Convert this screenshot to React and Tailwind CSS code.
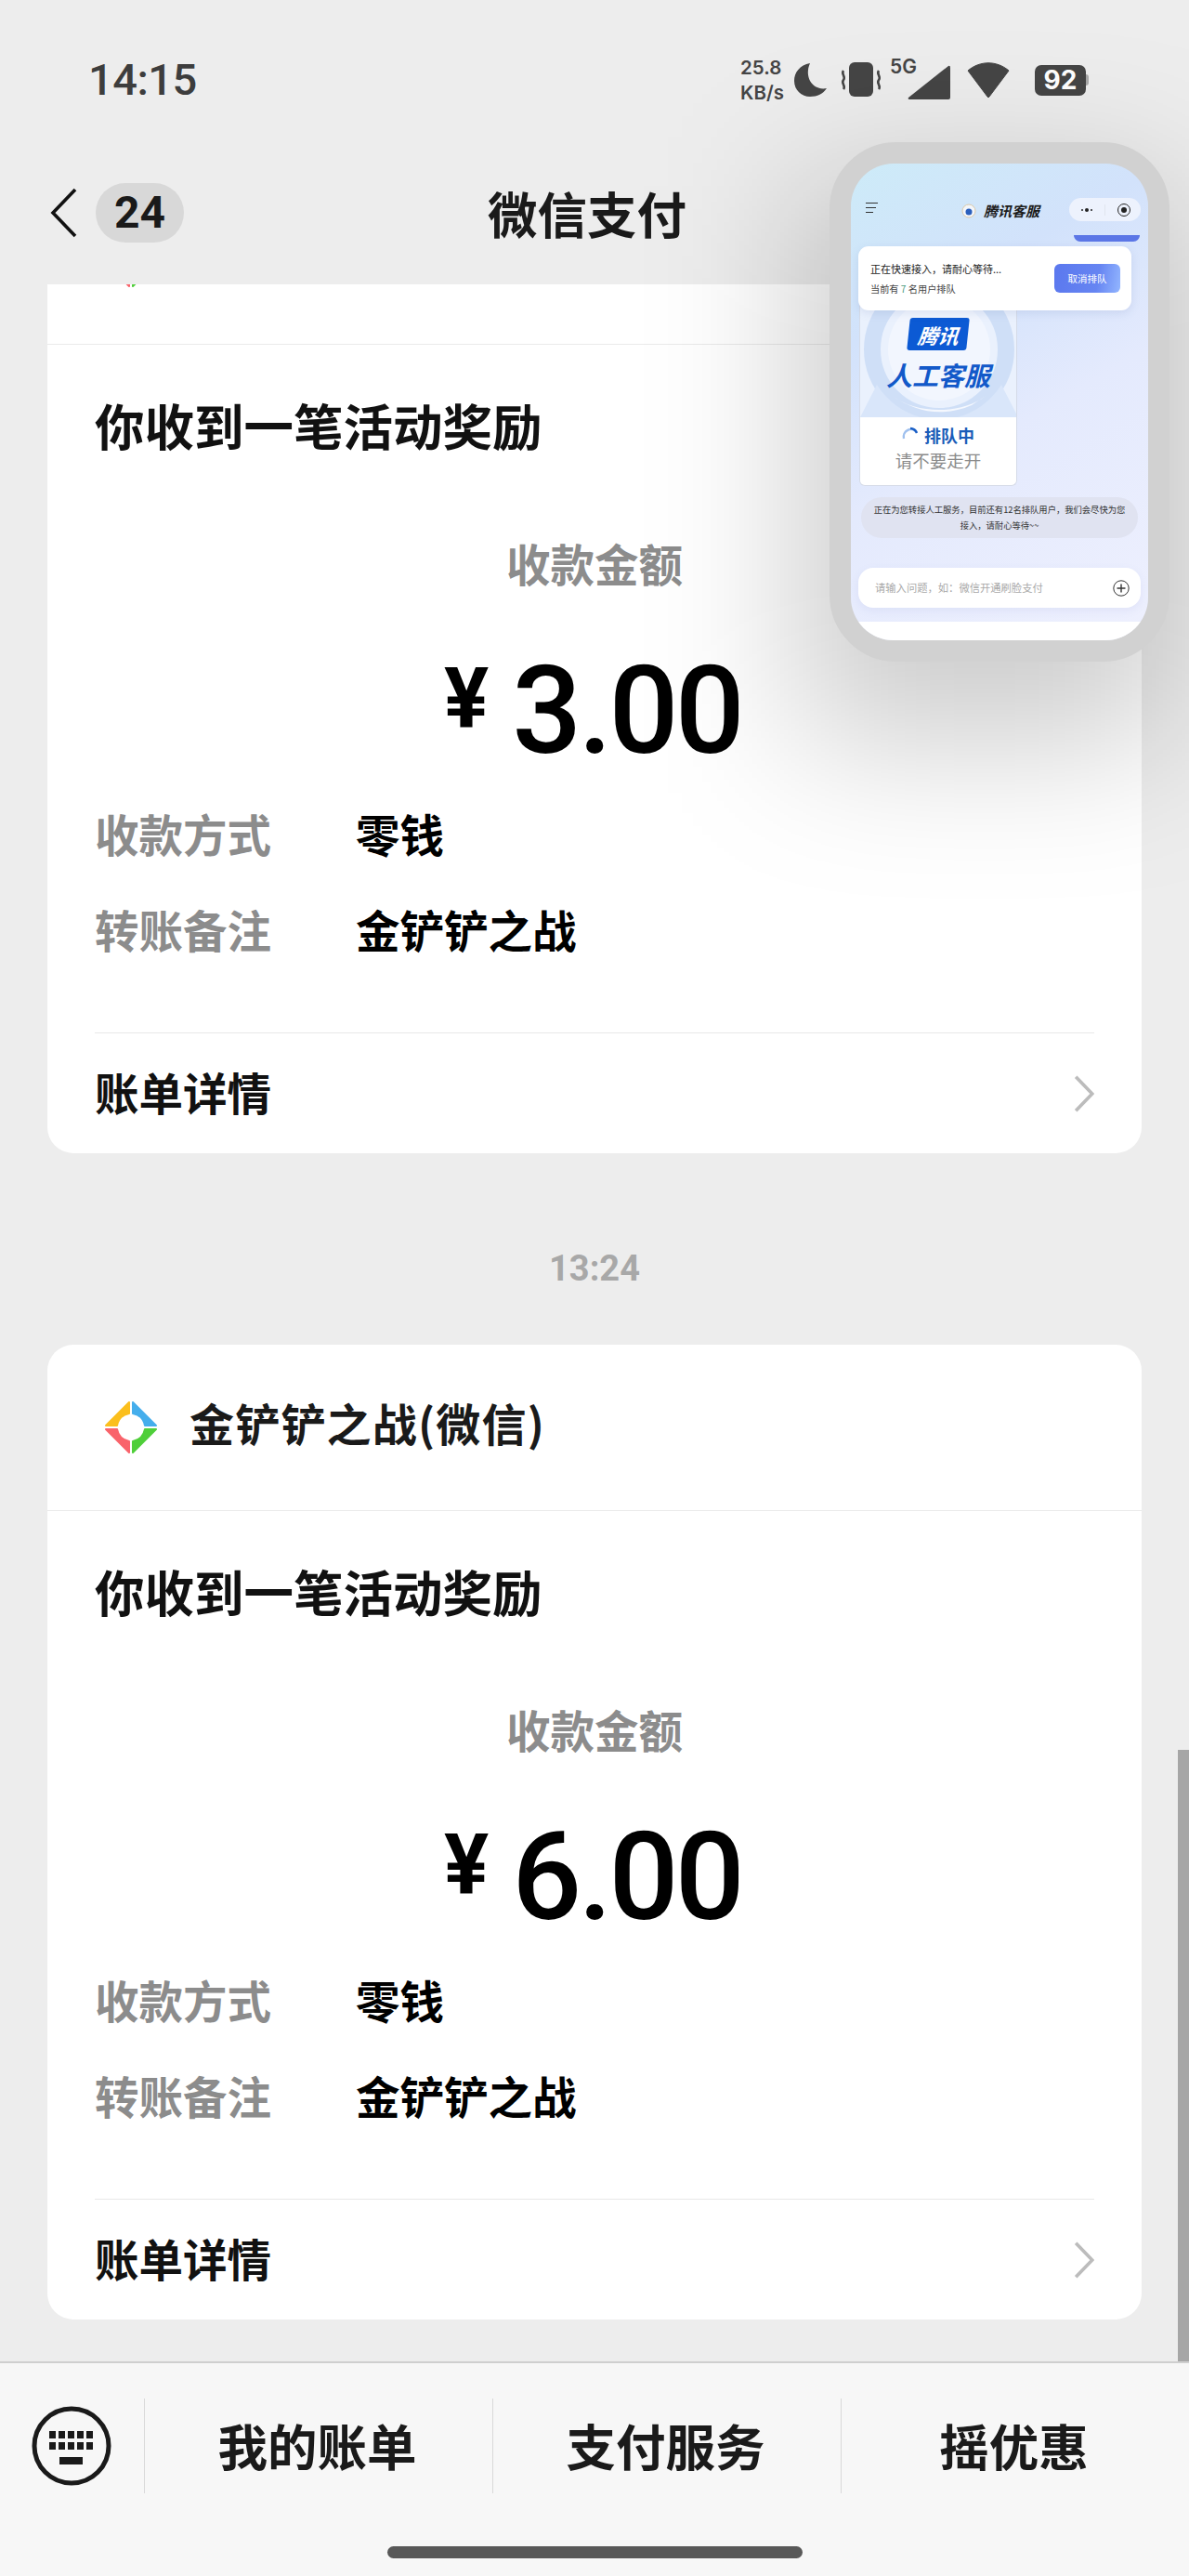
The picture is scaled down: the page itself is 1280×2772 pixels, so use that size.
const cjk = "font-['Noto_Sans_CJK_SC',sans-serif]";

const GameLogo = () => (
  <svg width="58" height="58" viewBox="0 0 58 58">
    <path d="M27 2 L27 14 Q16 16 14 27 L2 27 Z" fill="#fbbf1d" stroke="#fbbf1d" strokeWidth="2" strokeLinejoin="round" />
    <path d="M31 2 L31 14 Q42 16 44 27 L56 27 Z" fill="#45aeec" stroke="#45aeec" strokeWidth="2" strokeLinejoin="round" />
    <path d="M27 56 L27 44 Q16 42 14 31 L2 31 Z" fill="#f9636b" stroke="#f9636b" strokeWidth="2" strokeLinejoin="round" />
    <path d="M31 56 L31 44 Q42 42 44 31 L56 31 Z" fill="#4fcf3a" stroke="#4fcf3a" strokeWidth="2" strokeLinejoin="round" />
  </svg>
);

const Chevron = ({ className, color = '#111', width = 3 }) => (
  <svg className={className} viewBox="0 0 30 54" fill="none">
    <path d="M27 2 L3 27 L27 52" stroke={color} strokeWidth={width} />
  </svg>
);

const PayCard = ({ amount, className = '' }) => (
  <div className={`mx-[51px] rounded-[28px] bg-white ${className}`}>
    <div className="flex h-[179px] items-center border-b border-[#ebebeb] pl-[61px]">
      <GameLogo />
      <span className="mb-[12px] ml-[34px] text-[48px] font-bold leading-[64px] tracking-[1.2px] text-[#1a1a1a]">金铲铲之战(微信)</span>
    </div>
    <div className="px-[51px]">
      <div className="pt-[54px] text-[53.5px] font-bold leading-[64px] text-[#111]">你收到一笔活动奖励</div>
      <div className="mt-[85px] text-center text-[47.5px] font-bold leading-[64px] text-[#8c8c8c]">收款金额</div>
      <div className="mt-[67px] flex h-[120px] items-center justify-center pr-[4px] font-['Roboto',sans-serif] text-black">
        <span className="mb-[25px] mr-[25px] text-[90px] font-bold leading-none">¥</span>
        <span className="text-[132px] font-medium leading-none tracking-[-3.75px]">{amount}</span>
      </div>
      <div className="mt-[40px] flex text-[47.5px] font-bold leading-[64px]">
        <span className="w-[281px] text-[#8c8c8c]">收款方式</span>
        <span className="text-black">零钱</span>
      </div>
      <div className="mt-[39px] flex text-[47.5px] font-bold leading-[64px]">
        <span className="w-[281px] text-[#8c8c8c]">转账备注</span>
        <span className="text-black">金铲铲之战</span>
      </div>
      <div className="mt-[79px] flex h-[130px] items-center justify-between border-t border-[#e8e8e8]">
        <span className="mb-[3px] text-[47.5px] font-bold leading-[64px] text-[#111]">账单详情</span>
        <Chevron className="h-[40px] w-[22px] rotate-180" color="#bcbcbc" width={5} />
      </div>
    </div>
  </div>
);

const StatusIcons = () => (
  <div className="flex items-center text-[#454545]">
    <div className="flex flex-col font-['Inter',sans-serif] text-[20.5px] font-semibold leading-[27px]">
      <span>25.8</span>
      <span>KB/s</span>
    </div>
    <svg className="ml-[11px]" width="36" height="38" viewBox="0 0 36 38">
      <path d="M17 1 C6 3 0 11 0 20 C0 30 8 37 17 37 C25 37 31 34 35 28 C21 31 10 17 17 1 Z" fill="#454545" />
    </svg>
    <svg className="ml-[13px]" width="46" height="38" viewBox="0 0 46 38">
      <rect x="10" y="0" width="26" height="37" rx="6" fill="#454545" />
      <path d="M4 9 C1 13 7 15 4 19 C1 23 7 25 4 29 M42 9 C39 13 45 15 42 19 C39 23 45 25 42 29" fill="none" stroke="#454545" strokeWidth="2.6" />
    </svg>
    <div className="relative ml-[3px] h-[46px] w-[72px]">
      <span className="absolute left-[5px] top-[-4px] font-['Inter',sans-serif] text-[21px] font-semibold leading-[26px]">5G</span>
      <svg className="absolute left-[24px] top-[7px]" width="46" height="38" viewBox="0 0 46 38">
        <path d="M44 1 Q46 0 46 3 L46 35 Q46 37 44 37 L2 37 Q0 37 1 35 Z" fill="#454545" />
      </svg>
    </div>
    <svg className="ml-[16px]" width="46" height="40" viewBox="0 0 46 40">
      <path d="M1 10 C14 -1 32 -1 45 10 L24 38 Q23 40 22 38 Z" fill="#454545" stroke="#454545" strokeLinejoin="round" />
    </svg>
    <div className="ml-[27px] flex items-center">
      <div className="flex h-[33px] w-[55px] items-center justify-center rounded-[7px] bg-[#454545] font-['Inter',sans-serif] text-[28px] font-bold text-white">92</div>
      <div className="h-[12px] w-[3px] rounded-r bg-[#a8a8a8]" />
    </div>
  </div>
);

const MiniWindow = () => (
  <>
    {/* soft shadow under the floating window; a blurred box fades out smoother than box-shadow here */}
    <div className="absolute left-[860px] top-[200px] z-20 h-[600px] w-[400px] bg-black/20 blur-[80px]" />
    <div className="absolute left-[893px] top-[153px] z-20 h-[559px] w-[366px] rounded-[72px] border-[23px] border-[#d1d1d1]">
      <div className="relative h-full w-full overflow-hidden rounded-[46px] bg-[linear-gradient(150deg,#cdebf8_0%,#d2e2fb_28%,#e4eafd_55%,#eef0fe_100%)]">
        <div className="flex h-[77px] items-start">
          <div className="ml-[16px] mt-[42px] flex w-[13px] flex-col gap-[4px]">
            <span className="h-px w-[13px] bg-[#333]" />
            <span className="h-px w-[11px] bg-[#333]" />
            <span className="h-px w-[8px] bg-[#333]" />
          </div>
          <div className="ml-[90px] mt-[42px] flex items-center">
            <svg width="16" height="16" viewBox="0 0 16 16">
              <circle cx="8" cy="8" r="7" fill="#f3f6fb" stroke="#d9c7a8" />
              <circle cx="8" cy="9" r="3.5" fill="#2a5fbd" />
            </svg>
            <span className="ml-[8px] text-[15px] font-bold italic leading-[18px] text-[#1c1c1c]">腾讯客服</span>
          </div>
          <div className="ml-[32px] mt-[37px] flex h-[25px] w-[77px] items-center rounded-full bg-[#edf2fd]">
            <div className="flex w-[38px] items-center justify-center gap-[2px]">
              <span className="h-[2px] w-[2px] rounded-full bg-[#222]" />
              <span className="h-[4px] w-[4px] rounded-full bg-[#222]" />
              <span className="h-[2px] w-[2px] rounded-full bg-[#222]" />
            </div>
            <span className="h-[12px] w-px bg-[#dfe4ee]" />
            <span className="ml-[13px] flex h-[14px] w-[14px] items-center justify-center rounded-full border-[1.5px] border-[#222]">
              <span className="h-[6px] w-[6px] rounded-full bg-[#222]" />
            </span>
          </div>
        </div>
        <div className="absolute right-[9px] top-[77px] h-[7px] w-[71px] rounded-b-[8px] bg-[#5b76e6]" />
        <div className="absolute left-[8px] top-[89px] z-10 flex h-[69px] w-[294px] items-center justify-between rounded-[11px] bg-white pl-[13px] pr-[12px] shadow-[0_3px_10px_rgba(90,110,170,0.15)]">
          <div>
            <div className="text-[11px] leading-[16px] text-[#222]">正在快速接入，请耐心等待...</div>
            <div className="mt-[7px] text-[10.2px] leading-[14px] text-[#444]">
              当前有 <span className="text-[#4a9a80]">7</span> 名用户排队
            </div>
          </div>
          <div className="flex h-[31px] w-[71px] items-center justify-center rounded-[6px] bg-[linear-gradient(100deg,#5b78ee_0%,#6685f2_65%,#93b6ff_100%)] text-[10.5px] text-white">取消排队</div>
        </div>
        <div className="ml-[9px] mt-[61px] w-[170px] overflow-hidden rounded-b-[6px] border-x border-b border-[#d5dbe8] bg-white">
          <div className="relative flex h-[135px] flex-col items-center justify-end bg-[#eaf1fd]">
            <svg className="absolute inset-0" width="170" height="135" viewBox="0 0 170 135">
              <circle cx="85" cy="62" r="72" fill="none" stroke="#cfdff7" strokeWidth="18" />
              <circle cx="85" cy="62" r="55" fill="#f2f6fe" />
              <path d="M18 100 C50 150 120 150 152 100 L170 135 L0 135 Z" fill="#d9e6fa" />
              <path d="M35 112 C60 132 110 132 135 112 L120 122 C90 135 60 130 35 112 Z" fill="#f5f8fe" />
            </svg>
            <div className="relative flex h-[35px] w-[64px] -skew-x-6 items-center justify-center rounded-[3px] bg-[#0c5ad4] text-[22px] font-bold italic leading-none text-white">腾讯</div>
            <div className="relative mb-[30px] mt-[10px] text-[28px] font-bold italic leading-[32px] text-[#1259c9]">人工客服</div>
          </div>
          <div className="flex h-[73px] flex-col items-center pt-[7px]">
            <div className="flex items-center">
              <svg width="18" height="18" viewBox="0 0 18 18" fill="none">
                <path d="M2 13 A8 8 0 0 1 16 6" stroke="#9fc0ee" strokeWidth="2.4" />
                <path d="M9 2 A8 8 0 0 1 16 7" stroke="#1a5fc6" strokeWidth="2.4" />
              </svg>
              <span className="ml-[6px] text-[18px] font-bold leading-[24px] text-[#1a5cb8]">排队中</span>
            </div>
            <div className="mt-[2px] text-[18.5px] leading-[26px] text-[#8a8a8a]">请不要走开</div>
          </div>
        </div>
        <div className="ml-[11px] mt-[12px] flex h-[44px] w-[298px] items-center justify-center rounded-full bg-[#e0e3f1] px-[12px] text-center text-[9.3px] leading-[17px] text-[#333]">
          正在为您转接人工服务，目前还有12名排队用户，我们会尽快为您接入，请耐心等待~~
        </div>
        <div className="ml-[8px] mt-[32px] flex h-[43px] w-[304px] items-center justify-between rounded-[16px] bg-white pl-[18px] pr-[12px] shadow-[0_3px_10px_rgba(120,130,200,0.1)]">
          <span className="text-[11.3px] text-[#a9a9a9]">请输入问题，如：微信开通刷脸支付</span>
          <svg width="18" height="18" viewBox="0 0 18 18" fill="none" stroke="#333">
            <circle cx="9" cy="9" r="8.2" />
            <path d="M9 4.5 V13.5 M4.5 9 H13.5" strokeWidth="1.4" />
          </svg>
        </div>
        <div className="absolute bottom-0 left-0 h-[20px] w-full bg-white" />
      </div>
    </div>
  </>
);

const App = () => (
  <div className={`relative flex h-[2772px] w-[1280px] flex-col overflow-hidden bg-[#ededed] ${cjk}`}>
    <div className="relative z-10 h-[306px] shrink-0 bg-[#ededed]">
      <div className="flex items-center justify-between pl-[95px] pr-[108px] pt-[56px]">
        <span className="font-['Roboto',sans-serif] text-[47px] font-medium leading-[60px] tracking-[-0.5px] text-[#3d3d3d]">14:15</span>
        <StatusIcons />
      </div>
      <div className="mt-[81px] flex h-[64px] items-center pl-[54px]">
        <Chevron className="h-[54px] w-[30px]" width={3.6} />
        <div className="ml-[19px] flex h-[64px] w-[95px] items-center justify-center rounded-[32px] bg-[#d8d8d8] font-['Roboto',sans-serif] text-[48px] font-bold text-[#1a1a1a]">24</div>
        <span className="ml-[327px] text-[53.5px] font-bold leading-[64px] text-[#1a1a1a]">微信支付</span>
      </div>
    </div>

    <div className="relative min-h-0 flex-1 overflow-hidden">
      <PayCard amount="3.00" className="-mt-[114px]" />
      <div className="flex h-[206px] items-center justify-center pt-[42px] font-['Roboto',sans-serif] text-[38px] font-bold text-[#a8a8a8]">13:24</div>
      <PayCard amount="6.00" />
      <div className="absolute bottom-0 right-0 h-[658px] w-[12px] bg-[#a6a6a6]" />
    </div>

    <div className="h-[231px] shrink-0 border-t-2 border-[#cfcfcf] bg-[#f7f7f7] pt-[38px]">
      <div className="flex h-[102px] items-center text-[53.5px] font-bold text-[#1a1a1a]">
        <div className="flex w-[155px] justify-center pr-[2px]">
          <svg width="86" height="86" viewBox="0 0 86 86">
            <circle cx="43" cy="43" r="40" fill="none" stroke="#1a1a1a" strokeWidth="5" />
            <path
              d="M19 27h7v8h-7zM29 27h7v8h-7zM39 27h7v8h-7zM49 27h7v8h-7zM59 27h7v8h-7zM19 39h7v8h-7zM29 39h7v8h-7zM39 39h7v8h-7zM49 39h7v8h-7zM59 39h7v8h-7zM30 55h25v8h-25z"
              fill="#1a1a1a"
            />
          </svg>
        </div>
        <div className="flex h-full w-[375px] items-center justify-center border-l border-[#d9d9d9] pb-[2px] pr-[3px]">我的账单</div>
        <div className="flex h-full w-[375px] items-center justify-center border-l border-[#d9d9d9] pb-[2px] pr-[3px]">支付服务</div>
        <div className="flex h-full w-[375px] items-center justify-center border-l border-[#d9d9d9] pb-[2px] pr-[3px]">摇优惠</div>
      </div>
      <div className="mx-auto mt-[57px] h-[13px] w-[447px] rounded-full bg-[#585858]" />
    </div>

    <MiniWindow />
  </div>
);

export default App;
